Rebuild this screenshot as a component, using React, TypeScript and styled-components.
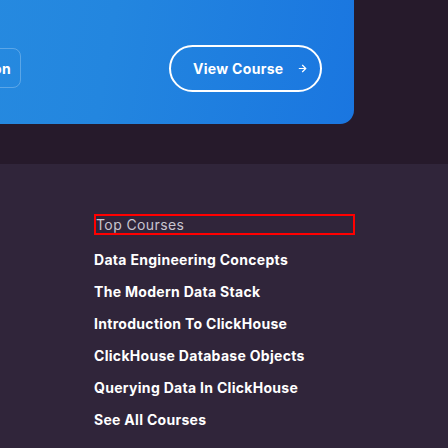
import styled, { createGlobalStyle } from 'styled-components';

const courses = [
  'Data Engineering Concepts',
  'The Modern Data Stack',
  'Introduction To ClickHouse',
  'ClickHouse Database Objects',
  'Querying Data In ClickHouse',
  'See All Courses',
];

const GlobalStyle = createGlobalStyle`
  html, body {
    margin: 0;
    padding: 0;
    background: #30253a;
  }
  body {
    font-family: Inter, "Liberation Sans", sans-serif;
    overflow: hidden;
  }
`;

const App = (): JSX.Element => {
  return (
    <>
      <GlobalStyle />
      <Page>
        <Hero>
          <Banner>
            <GhostButton>Start Lesson</GhostButton>
            <CourseButton>
              View Course
              <svg width="11" height="11" viewBox="0 0 24 24" fill="none" stroke="currentColor" strokeWidth="2.6" strokeLinecap="round" strokeLinejoin="round">
                <path d="M5 12h14" />
                <path d="m12 5 7 7-7 7" />
              </svg>
            </CourseButton>
          </Banner>
        </Hero>
        <Footer>
          <SectionTitle>Top Courses</SectionTitle>
          <CourseList>
            {courses.map((c) => (
              <CourseItem key={c}>{c}</CourseItem>
            ))}
          </CourseList>
        </Footer>
      </Page>
    </>
  );
};

export default App;

const Page = styled.div`
  width: 448px;
  height: 448px;
  overflow: hidden;
  display: flex;
  flex-direction: column;
`;

const Hero = styled.section`
  flex: none;
  background: #261a2b;
  padding-bottom: 40px;
`;

const Banner = styled.div`
  width: 554px;
  height: 124px;
  margin-left: -200px;
  box-sizing: border-box;
  padding: 12px 32px 0 0;
  display: flex;
  align-items: center;
  justify-content: flex-end;
  background: linear-gradient(100deg, #2a8fe0 0%, #2386df 55%, #1a76e0 100%);
  border-bottom-right-radius: 14px;
`;

const GhostButton = styled.div`
  box-sizing: border-box;
  height: 40px;
  display: flex;
  align-items: center;
  padding: 0 9px 0 16px;
  margin-right: 148px;
  border: 1px solid rgba(255, 255, 255, 0.25);
  border-radius: 8px;
  color: #fff;
  font-size: 14px;
  font-weight: 700;
  letter-spacing: 0.3px;
  white-space: nowrap;
`;

const CourseButton = styled.div`
  box-sizing: border-box;
  width: 153px;
  height: 47px;
  display: flex;
  align-items: center;
  gap: 14px;
  padding: 0 0 0 22px;
  border: 2px solid #fff;
  border-radius: 24px;
  color: #fff;
  font-size: 14px;
  font-weight: 700;
  letter-spacing: 0.3px;
  white-space: nowrap;
`;

const Footer = styled.section`
  flex: 1;
  background: #30253a;
  padding: 50px 93px 0 94px;
`;

const SectionTitle = styled.h2`
  margin: 0;
  height: 21px;
  box-sizing: border-box;
  border: 2px solid #ff0000;
  color: #c9c4d0;
  font-size: 14px;
  font-weight: 400;
  letter-spacing: 0.4px;
  line-height: 17px;
`;

const CourseList = styled.ul`
  list-style: none;
  margin: 9px 0 0;
  padding: 0;
`;

const CourseItem = styled.li`
  height: 32px;
  line-height: 32px;
  color: #fff;
  font-size: 14px;
  font-weight: 700;
  letter-spacing: 0.3px;
  white-space: nowrap;
`;
